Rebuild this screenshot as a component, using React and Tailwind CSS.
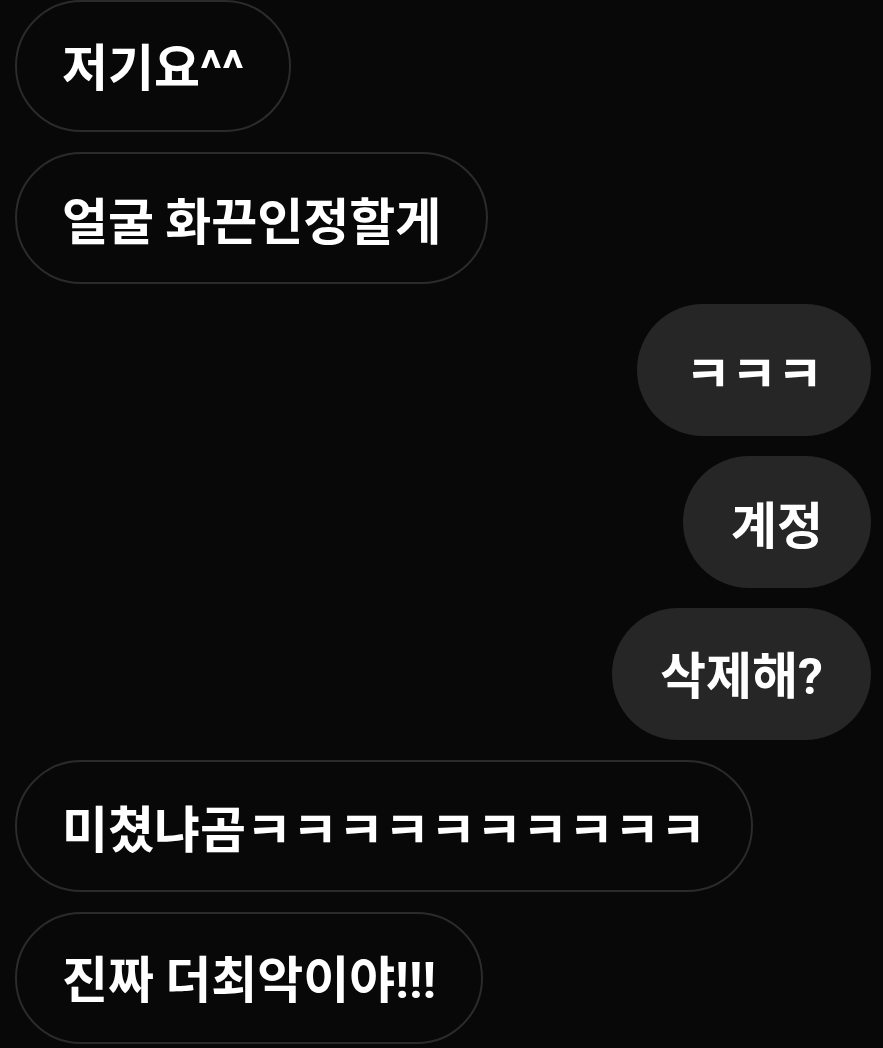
const messages = [
  { id: 1, text: '저기요^^', mine: false },
  { id: 2, text: '얼굴 화끈인정할게', mine: false },
  { id: 3, text: 'ㅋㅋㅋ', mine: true },
  { id: 4, text: '계정', mine: true },
  { id: 5, text: '삭제해?', mine: true },
  { id: 6, text: '미쳤냐곰ㅋㅋㅋㅋㅋㅋㅋㅋㅋㅋ', mine: false },
  { id: 7, text: '진짜 더최악이야!!!', mine: false },
];

// latin punctuation in the screenshot is narrower than Noto's, so give it Roboto
const renderText = (text) =>
  text.split(/([\^!?]+)/).map((part, i) =>
    /^[\^!?]+$/.test(part) ? (
      <span key={i} className="font-bold" style={{ fontFamily: 'Roboto, sans-serif' }}>
        {part}
      </span>
    ) : (
      part
    )
  );

const Bubble = ({ text, mine }) => (
  <div className={mine ? 'flex justify-end' : 'flex justify-start'}>
    <div
      className={
        mine
          ? 'h-[132px] flex items-center px-[48px] rounded-full bg-[#262626] text-white'
          : 'h-[132px] flex items-center px-[45px] rounded-full border-2 border-[#2b2b2b] text-white'
      }
    >
      <span className="text-[50px] leading-none font-semibold whitespace-nowrap">{renderText(text)}</span>
    </div>
  </div>
);

const App = () => {
  return (
    <div
      className="w-[883px] h-[1048px] overflow-hidden bg-[#080808] pl-[15px] pr-[12px] flex flex-col gap-[20px]"
      style={{ fontFamily: '"Noto Sans CJK KR", "Noto Sans", sans-serif' }}
    >
      {messages.map((m) => (
        <Bubble key={m.id} text={m.text} mine={m.mine} />
      ))}
    </div>
  );
};

export default App;
